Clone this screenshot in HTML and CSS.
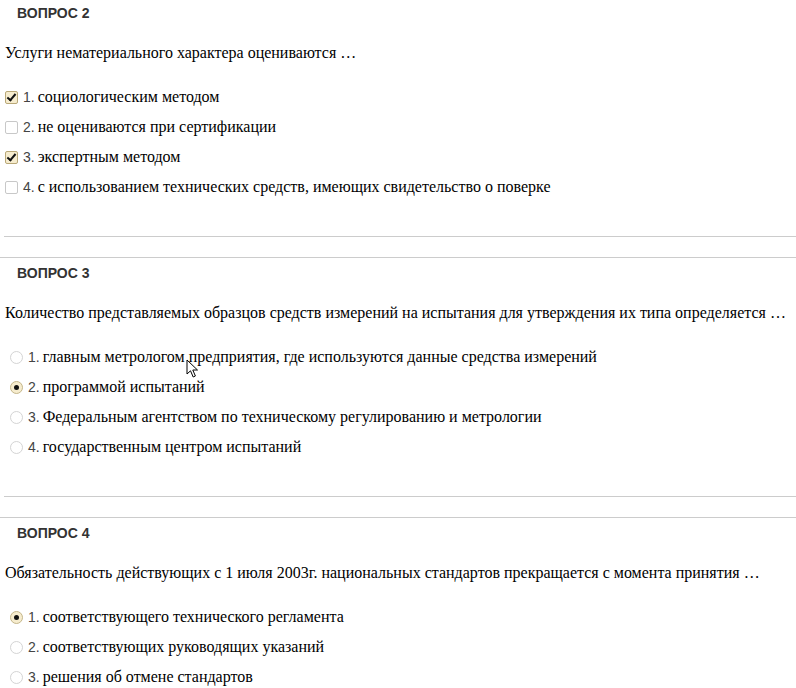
FILE: index.html
```html
<!DOCTYPE html>
<html lang="ru">
<head>
<meta charset="utf-8">
<title>Тест</title>
<link rel="stylesheet" href="styles.css">
</head>
<body>
<div class="page">
  <section class="question">
    <h3 class="q-head">ВОПРОС 2</h3>
    <p class="q-text">Услуги нематериального характера оцениваются …</p>
    <ul class="options">
      <li class="opt"><span class="box cb checked"></span><span class="num">1.</span><span class="label">социологическим методом</span></li>
      <li class="opt"><span class="box cb"></span><span class="num">2.</span><span class="label">не оцениваются при сертификации</span></li>
      <li class="opt"><span class="box cb checked"></span><span class="num">3.</span><span class="label">экспертным методом</span></li>
      <li class="opt"><span class="box cb"></span><span class="num">4.</span><span class="label">с использованием технических средств, имеющих свидетельство о поверке</span></li>
    </ul>
    <hr class="q-end">
  </section>
  <section class="question">
    <h3 class="q-head">ВОПРОС 3</h3>
    <p class="q-text">Количество представляемых образцов средств измерений на испытания для утверждения их типа определяется …</p>
    <ul class="options radios">
      <li class="opt"><span class="box rb"></span><span class="num">1.</span><span class="label">главным метрологом предприятия, где используются данные средства измерений</span></li>
      <li class="opt"><span class="box rb checked"></span><span class="num">2.</span><span class="label">программой испытаний</span></li>
      <li class="opt"><span class="box rb"></span><span class="num">3.</span><span class="label">Федеральным агентством по техническому регулированию и метрологии</span></li>
      <li class="opt"><span class="box rb"></span><span class="num">4.</span><span class="label">государственным центром испытаний</span></li>
    </ul>
    <hr class="q-end">
  </section>
  <section class="question">
    <h3 class="q-head">ВОПРОС 4</h3>
    <p class="q-text">Обязательность действующих с 1 июля 2003г. национальных стандартов прекращается с момента принятия …</p>
    <ul class="options radios">
      <li class="opt"><span class="box rb checked"></span><span class="num">1.</span><span class="label">соответствующего технического регламента</span></li>
      <li class="opt"><span class="box rb"></span><span class="num">2.</span><span class="label">соответствующих руководящих указаний</span></li>
      <li class="opt"><span class="box rb"></span><span class="num">3.</span><span class="label">решения об отмене стандартов</span></li>
    </ul>
  </section>
  <svg class="cursor" width="14" height="20" viewBox="0 0 14 20"><path d="M1 1 L1 15 L4.5 11.8 L7.2 18 L9.4 17 L6.8 11 L11.5 11 Z" fill="#fff" stroke="#000" stroke-width="1" stroke-linejoin="round"/></svg>
</div>
</body>
</html>
```
FILE: styles.css
```css
html, body {
  margin: 0;
  padding: 0;
  background: #fff;
}
.page {
  position: relative;
  width: 796px;
  color: #000;
}
.q-text,
.label {
  font-family: "Liberation Serif", "Times New Roman", serif;
}
.question {
  border-top: 1px solid #ccc;
  padding-top: 5px;
}
.question:first-child {
  border-top: none;
  padding-top: 3px;
}
.q-head {
  margin: 0;
  padding-left: 17px;
  font-family: "Liberation Sans", Arial, sans-serif;
  font-weight: bold;
  font-size: 14px;
  line-height: 20px;
  color: #333;
}
.q-text {
  margin: 20px 0 0;
  padding-left: 5px;
  font-size: 16px;
  line-height: 20px;
}
.options {
  list-style: none;
  margin: 19px 0 0;
  padding: 0;
}
.opt {
  display: flex;
  align-items: center;
  height: 30px;
  font-size: 16px;
  line-height: 20px;
}
.num {
  font-family: "Liberation Sans", Arial, sans-serif;
  font-size: 14px;
  color: #444;
  margin-right: 3px;
}
.box {
  flex: none;
  box-sizing: border-box;
  width: 13px;
  height: 13px;
  background: #fff;
  border: 1px solid #c8c8c8;
  position: relative;
}
.cb {
  margin-left: 5px;
  margin-right: 5px;
  border-radius: 2px;
}
.cb.checked {
  background: #f6ecce;
  border-color: #b9a878;
}
.cb.checked::after {
  content: "";
  position: absolute;
  left: 3px;
  top: 0px;
  width: 3px;
  height: 7px;
  border: solid #111;
  border-width: 0 2px 2px 0;
  transform: rotate(40deg);
}
.rb {
  margin-left: 10px;
  margin-right: 5px;
  border-radius: 50%;
  border-color: #d4d4d4;
}
.rb.checked {
  background: #f6ecce;
  border-color: #c4b68a;
}
.rb.checked::after {
  content: "";
  position: absolute;
  left: 3px;
  top: 3px;
  width: 5px;
  height: 5px;
  border-radius: 50%;
  background: #111;
}
.q-end {
  margin: 34px 0 20px 4px;
  border: none;
  border-top: 1px solid #ccc;
  height: 0;
}
.cursor {
  position: absolute;
  left: 186px;
  top: 359px;
}
```
